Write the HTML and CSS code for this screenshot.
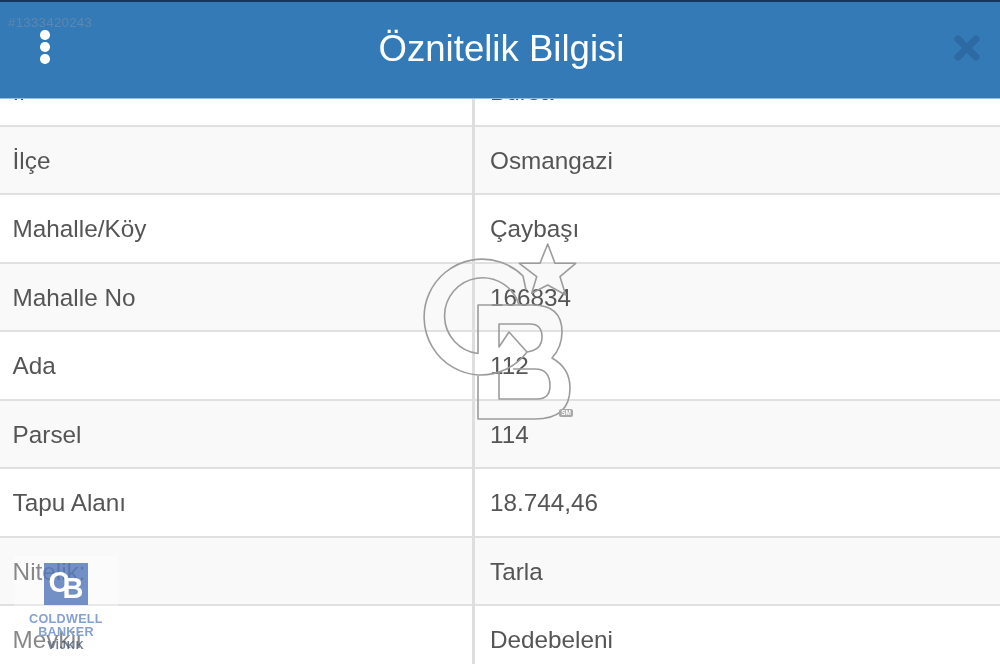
FILE: index.html
```html
<!DOCTYPE html>
<html lang="tr">
<head>
<meta charset="utf-8">
<title>Öznitelik Bilgisi</title>
<link rel="stylesheet" href="styles.css">
</head>
<body>
<div class="page">
  <header class="header">
    <div class="menu"><span class="dot"></span><span class="dot"></span><span class="dot"></span></div>
    <h1 class="title">Öznitelik Bilgisi</h1>
    <svg class="close" viewBox="0 0 28 28"><path d="M5 5 L23 23 M23 5 L5 23"/></svg>
  </header>
  <main class="scroller">
    <div class="table">
      <div class="row"><div class="key">İl</div><div class="val">Bursa</div></div>
      <div class="row"><div class="key">İlçe</div><div class="val">Osmangazi</div></div>
      <div class="row"><div class="key">Mahalle/Köy</div><div class="val">Çaybaşı</div></div>
      <div class="row"><div class="key">Mahalle No</div><div class="val">166834</div></div>
      <div class="row"><div class="key">Ada</div><div class="val">112</div></div>
      <div class="row"><div class="key">Parsel</div><div class="val">114</div></div>
      <div class="row"><div class="key">Tapu Alanı</div><div class="val">18.744,46</div></div>
      <div class="row"><div class="key">Nitelik:</div><div class="val">Tarla</div></div>
      <div class="row"><div class="key">Mevkii</div><div class="val">Dedebeleni</div></div>
    </div>
  </main>
  <div class="listing-id">#1333420243</div>
  <svg class="watermark" viewBox="420 240 160 190">
    <path d="M547.7 244 L555 263.3 L575.7 263.3 L560 276.7 L565.7 295 L547.7 285 L531.7 293.3 L536.7 276.7 L519.3 263.3 L540 263.3 Z"/>
    <path d="M527 352 A58 58 0 0 1 478 375 A58 58 0 1 1 523 276 L526 290"/>
    <path d="M478 353.5 A38 38 0 1 1 519 305"/>
    <path d="M478 354 V305 H533 Q562 305 562 332 Q562 347 552 358 Q570 368 570 388 Q570 419 535 419 H478 V376"/>
    <path d="M527 352 L509 332 L499 347 V324 H530 Q542 324 542 337 Q542 350 527 352 Z"/>
    <path d="M499 372 V399 H537 Q550 399 550 386 Q550 369 535 369 H513"/>
    <rect class="sm-box" x="559" y="409" width="14" height="8" rx="2"/>
    <text class="sm-text" x="566" y="415.2">SM</text>
  </svg>
  <aside class="brand">
    <div class="brand-mark"><span class="mark-c">C</span><span class="mark-b">B</span></div>
    <div class="brand-name">COLDWELL<br>BANKER</div>
    <div class="brand-office">VİJKK</div>
  </aside>
</div>
</body>
</html>
```
FILE: styles.css
```css
* { box-sizing: border-box; }
html, body { margin: 0; padding: 0; height: 100%; overflow: hidden; }
body { font-family: "Liberation Sans", Arial, sans-serif; color: #555; background: #fff; }

.page { position: relative; width: 1000px; height: 664px; overflow: hidden; display: flex; flex-direction: column; filter: blur(.3px); }

.header {
  height: 99px; flex: none; display: flex; align-items: center; justify-content: center; position: relative; z-index: 2;
  background: #337ab7;
  border-top: 2px solid #14365f;
  border-bottom: 1px solid #8fc4ea;
  padding: 0 0 2px 3px;
}
.title { margin: 0; font-size: 36.6px; font-weight: 400; color: #fff; line-height: 1; }

.menu { position: absolute; left: 40px; top: 28px; display: flex; flex-direction: column; gap: 2.6px; }
.dot { width: 9.5px; height: 9.5px; border-radius: 50%; background: #fff; }

.close { position: absolute; left: 953px; top: 32px; width: 28px; height: 28px; }
.close path { fill: none; stroke: #2d69a3; stroke-width: 7; stroke-linecap: round; }

.scroller { flex: 1; overflow: hidden; }
.table { margin-top: -41px; }

.row {
  height: 68.5px; display: grid; grid-template-columns: 474.5px 1fr;
  border-bottom: 2.5px solid #e0e0e0; background: #fff;
  font-size: 24.3px; line-height: 68px;
}
.row:nth-child(even) { background: #f9f9f9; }
.key { padding-left: 12.6px; border-right: 3px solid #dedede; }
.val { padding-left: 15.5px; }

.listing-id { position: absolute; left: 8px; top: 15px; font-size: 13.4px; letter-spacing: .2px; color: #5f86ad; z-index: 3; }

.watermark { position: absolute; left: 420px; top: 240px; width: 160px; height: 190px; z-index: 3; }
.watermark path { fill: none; stroke: #9c9c9c; stroke-width: 1.6; stroke-linejoin: round; }
.sm-box { fill: #a8a8a8; }
.sm-text { font-size: 6.5px; font-weight: 700; text-anchor: middle; fill: #fff; }

.brand {
  position: absolute; left: 14px; top: 556px; width: 104px; height: 100px; z-index: 3;
  display: flex; flex-direction: column; align-items: center;
  background: rgba(255, 255, 255, .3);
}
.brand-mark {
  width: 44px; height: 42px; margin-top: 7px; flex: none; display: flex; justify-content: center;
  background: rgba(80, 118, 184, .8); color: #fff;
  font-size: 29px; font-weight: 700; line-height: 38px;
}
.mark-b { margin: 6px 0 0 -7px; }
.brand-name { margin-top: 8px; font-size: 12.6px; font-weight: 700; line-height: 12.5px; color: #85a1d2; text-align: center; letter-spacing: .3px; }
.brand-office { font-size: 11px; font-weight: 700; line-height: 14px; color: #4a5b78; letter-spacing: 1px; opacity: .8; }
```
